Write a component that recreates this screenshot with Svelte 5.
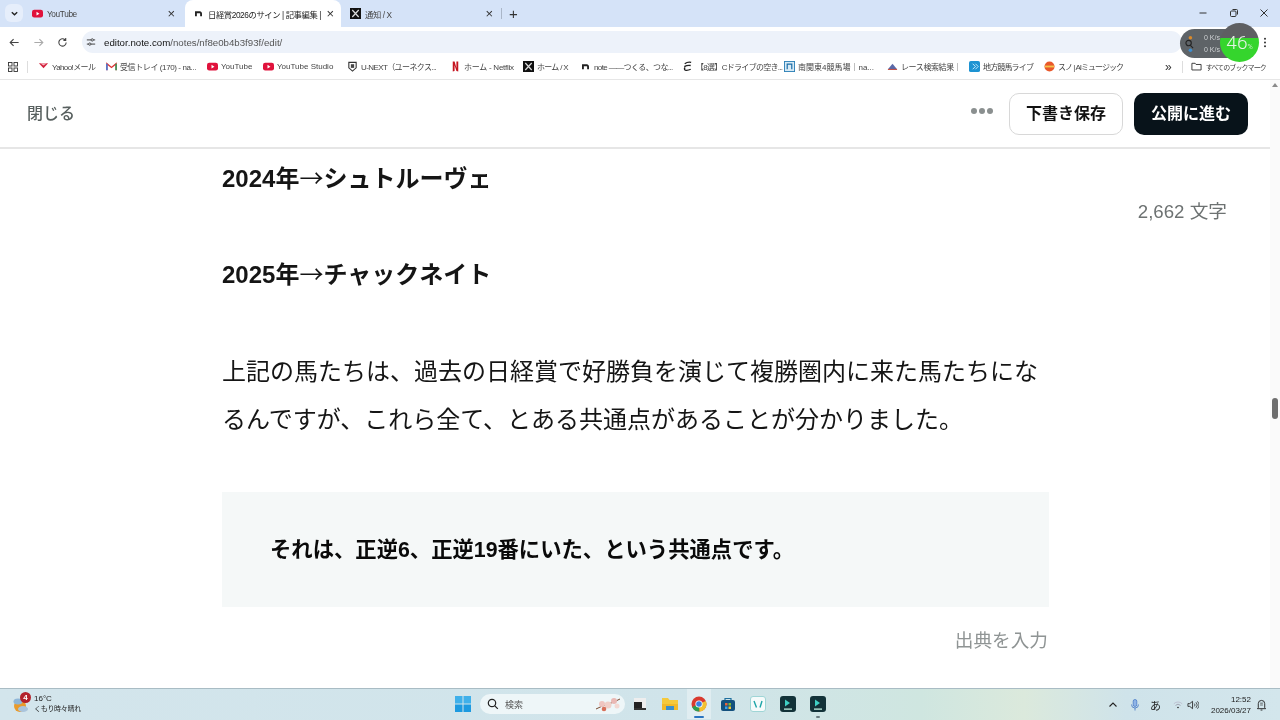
<script>
  const bookmarks = [
    { t: 'Yahoo!メール', w: 68, ls: -0.6, i: 'yahoo' },
    { t: '受信トレイ (170) - na...', w: 101, ls: -0.4, i: 'gmail' },
    { t: 'YouTube', w: 56, ls: 0, i: 'yt' },
    { t: 'YouTube Studio', w: 84, ls: 0, i: 'yt' },
    { t: 'U-NEXT（ユーネクス...', w: 103, ls: -0.6, i: 'unext' },
    { t: 'ホーム - Netflix', w: 73, ls: -0.25, i: 'netflix' },
    { t: 'ホーム / X', w: 57, ls: -0.7, i: 'x' },
    { t: 'note ――つくる、つな...', w: 102, ls: -0.6, i: 'note' },
    { t: '【8選】Cドライブの空き...', w: 102, ls: -0.7, i: 'e' },
    { t: '南関東4競馬場｜na...', w: 103, ls: 0, i: 'nankan' },
    { t: 'レース検索結果｜', w: 82, ls: -0.4, i: 'race' },
    { t: '地方競馬ライブ', w: 75, ls: -0.85, i: 'chiho' },
    { t: 'スノ | AIミュージック', w: 82, ls: -1, i: 'suno' }
  ];
</script>

{#snippet favicon(kind)}
  {#if kind === 'yt'}
    <svg class="fav" viewBox="0 0 12 12"><rect x="0" y="2" width="12" height="8.4" rx="2.4" fill="#e0123c"/><path d="M4.9 4.2v4l3.2-2z" fill="#fff"/></svg>
  {:else if kind === 'x'}
    <svg class="fav" viewBox="0 0 12 12"><rect width="12" height="12" fill="#111"/><path d="M2.5 2.2l7 7.6M9.5 2.2l-7 7.6" stroke="#ddd" stroke-width="1.3"/></svg>
  {:else if kind === 'note'}
    <svg class="fav" viewBox="0 0 12 12"><path d="M3.2 9V4.600h4.300a1.300 1.300 0 0 1 1.300 1.300V9" fill="none" stroke="#222" stroke-width="2"/></svg>
  {:else if kind === 'yahoo'}
    <svg class="fav" viewBox="0 0 12 12"><path d="M1 2.5h10L6 8z" fill="#d3203c"/><path d="M2.5 2.5h7L6 5z" fill="#f4b7c0"/></svg>
  {:else if kind === 'gmail'}
    <svg class="fav" viewBox="0 0 12 12"><path d="M1 10V3l5 4 5-4v7" fill="none" stroke="#d33" stroke-width="1.5"/><path d="M1 10V3" stroke="#3a7de0" stroke-width="1.6"/><path d="M11 10V3" stroke="#2a9d5b" stroke-width="1.6"/></svg>
  {:else if kind === 'unext'}
    <svg class="fav" viewBox="0 0 12 12"><path d="M2 1.5h8v6L6 11 2 7.5z" fill="none" stroke="#333" stroke-width="1.2"/><rect x="4.2" y="3.5" width="3.6" height="4" fill="#444"/></svg>
  {:else if kind === 'netflix'}
    <svg class="fav" viewBox="0 0 12 12"><path d="M3 .5h2l2 7V.5h2v11l-2-.5-2-6.500V11l-2 .5z" fill="#c5141f"/></svg>
  {:else if kind === 'e'}
    <svg class="fav" viewBox="0 0 12 12"><path d="M3 3c2-1.500 5-2 7-1.500M2.500 6.200c2-1.200 5-1.700 7-1.300M3.500 10c-1.200-1-1-2.200 0-3M3.500 10c2 .5 4 0 6-1" fill="none" stroke="#222" stroke-width="1.500"/></svg>
  {:else if kind === 'nankan'}
    <svg class="fav" viewBox="0 0 12 12"><rect x=".5" y=".5" width="11" height="11" fill="#d7eaf5" stroke="#2a7fb5"/><path d="M3.500 9V3.500h5V9" fill="none" stroke="#1c6ea8" stroke-width="1.300"/></svg>
  {:else if kind === 'race'}
    <svg class="fav" viewBox="0 0 12 12"><path d="M1 9l5-6 5 6z" fill="#5a6aa8"/><path d="M1 9.200h10" stroke="#c0392b" stroke-width="1"/></svg>
  {:else if kind === 'chiho'}
    <svg class="fav" viewBox="0 0 12 12"><rect width="12" height="12" rx="2" fill="#1d93d2"/><path d="M4 3l3 3-3 3M7 3l3 3-3 3" fill="none" stroke="#cfeeff" stroke-width="1"/></svg>
  {:else if kind === 'suno'}
    <svg class="fav" viewBox="0 0 12 12"><circle cx="6" cy="6" r="5.500" fill="#e9582a"/><path d="M1 6h10" stroke="#f4c24a" stroke-width="2"/></svg>
  {/if}
{/snippet}

<div class="screen">
  <header class="chrome">
    <div class="tabstrip">
      <div class="tab-menu">
        <svg viewBox="0 0 10 10" width="9" height="9"><path d="M2 3.500l3 3 3-3" fill="none" stroke="#222" stroke-width="1.500"/></svg>
      </div>
      <div class="tab first">
        {@render favicon('yt')}
        <span class="tab-title">YouTube</span>
        <span class="tab-x">×</span>
      </div>
      <div class="tab active">
        {@render favicon('note')}
        <span class="tab-title">日経賞2026のサイン | 記事編集 |</span>
        <span class="tab-x">×</span>
      </div>
      <div class="tab last">
        {@render favicon('x')}
        <span class="tab-title">通知 / X</span>
        <span class="tab-x">×</span>
      </div>
      <div class="tab-sep"></div>
      <span class="plus">+</span>
      <div class="winctl">
        <svg viewBox="0 0 10 10"><path d="M1.500 5h7" stroke="#333" stroke-width="1"/></svg>
        <svg viewBox="0 0 10 10"><rect x="1.500" y="3" width="5.500" height="5.500" rx="1" fill="none" stroke="#333"/><path d="M3.500 1.500h4a1 1 0 0 1 1 1v4" fill="none" stroke="#333"/></svg>
        <svg viewBox="0 0 10 10"><path d="M1.500 1.500l7 7M8.500 1.500l-7 7" stroke="#333" stroke-width="1"/></svg>
      </div>
    </div>

    <div class="toolbar">
      <svg class="nav" viewBox="0 0 12 12"><path d="M10.500 6h-9M5 2.300L1.300 6 5 9.700" fill="none" stroke="#444" stroke-width="1.200"/></svg>
      <svg class="nav" viewBox="0 0 12 12"><path d="M1.500 6h9M7 2.300L10.700 6 7 9.700" fill="none" stroke="#aaa" stroke-width="1.200"/></svg>
      <svg class="nav" viewBox="0 0 12 12"><path d="M10 6a4 4 0 1 1-1.200-2.900M9.500 1.200v2.500H7" fill="none" stroke="#444" stroke-width="1.200"/></svg>
      <div class="omnibox">
        <svg class="tune" viewBox="0 0 12 12"><path d="M1 3.500h5M9 3.500h2M1 8.500h2M6 8.500h5" stroke="#333" stroke-width="1.100"/><circle cx="7.500" cy="3.500" r="1.400" fill="none" stroke="#333"/><circle cx="4.500" cy="8.500" r="1.400" fill="none" stroke="#333"/></svg>
        <span class="url"><b>editor.note.com</b>/notes/nf8e0b4b3f93f/edit/</span>
      </div>
      <svg class="kebab" viewBox="0 0 4 12"><circle cx="2" cy="2" r="1.100"/><circle cx="2" cy="6" r="1.100"/><circle cx="2" cy="10" r="1.100"/></svg>
    </div>

    <div class="bookmarks">
      <svg class="apps" viewBox="0 0 10 10"><g fill="none" stroke="#333" stroke-width=".9"><rect x=".5" y=".5" width="3.500" height="3.500"/><rect x="6" y=".5" width="3.500" height="3.500"/><rect x=".5" y="6" width="3.500" height="3.500"/><rect x="6" y="6" width="3.500" height="3.500"/></g></svg>
      <div class="bm-sep"></div>
      {#each bookmarks as b}
        <div class="bm" style:width="{b.w}px">
          {@render favicon(b.i)}
          <span class="bm-text" style:letter-spacing="{b.ls}px">{b.t}</span>
        </div>
      {/each}
      <span class="more">»</span>
      <div class="bm-sep right"></div>
      <svg class="folder" viewBox="0 0 12 12"><path d="M1 2.500h3.500l1 1.300H11v6H1z" fill="none" stroke="#333" stroke-width="1"/></svg>
      <span class="bm-text all">すべてのブックマーク</span>
    </div>

    <div class="netmeter">
      <div class="meter-left">
        <svg viewBox="0 0 14 20" width="13" height="18"><circle cx="8" cy="3" r="2" fill="#d98a2b"/><circle cx="6" cy="9" r="3" fill="none" stroke="#222" stroke-width="1.200"/><path d="M8 11.500l3 3" stroke="#222" stroke-width="1.200"/><circle cx="8" cy="17" r="2" fill="#3d8ecf"/></svg>
        <div class="rates"><span>0 K/s</span><span>0 K/s</span></div>
      </div>
      <div class="meter-ball"><span class="pct">46<small>%</small></span></div>
    </div>
  </header>

  <div class="viewport">
    <div class="page">
      <div class="note-bar">
        <span class="close">閉じる</span>
        <div class="actions">
          <div class="dots"><i></i><i></i><i></i></div>
          <div class="btn ghost">下書き保存</div>
          <div class="btn solid">公開に進む</div>
        </div>
      </div>

      <main class="editor">
        <article class="article">
          <p class="strong">2024年<span class="arrow">→</span>シュトルーヴェ</p>
          <p class="blank"></p>
          <p class="strong">2025年<span class="arrow">→</span>チャックネイト</p>
          <p class="blank"></p>
          <p class="body">上記の馬たちは、過去の日経賞で好勝負を演じて複勝圏内に来た馬たちにな<br />るんですが、これら全て、とある共通点があることが分かりました。</p>
          <blockquote>それは、正逆6、正逆19番にいた、という共通点です。</blockquote>
          <div class="cite">出典を入力</div>
        </article>
        <div class="count">2,662 文字</div>
      </main>
    </div>
    <div class="scrollbar">
      <span class="sb-arrow"></span>
      <div class="thumb"></div>
    </div>
  </div>

  <footer class="taskbar">
    <div class="weather">
      <div class="w-icon">
        <svg viewBox="0 0 18 18" width="18" height="18"><circle cx="8" cy="10" r="6" fill="#e99a2c"/><ellipse cx="6" cy="5.500" rx="4.500" ry="3" fill="#8fb6d8"/><ellipse cx="11" cy="13" rx="5" ry="3" fill="#a9c4dc"/></svg>
        <span class="w-badge">4</span>
      </div>
      <div class="w-text"><span>16°C</span><span class="w-desc">くもり時々晴れ</span></div>
    </div>

    <div class="center">
      <svg class="tb win" viewBox="0 0 16 16"><g fill="#1d9ae0"><rect x="0" y="0" width="7.500" height="7.500" fill="#3fb0ea"/><rect x="8.500" y="0" width="7.500" height="7.500" fill="#3fb0ea"/><rect x="0" y="8.500" width="7.500" height="7.500"/><rect x="8.500" y="8.500" width="7.500" height="7.500"/></g></svg>
      <div class="search">
        <svg viewBox="0 0 12 12" width="12" height="12"><circle cx="5" cy="5" r="3.700" fill="none" stroke="#222" stroke-width="1.200"/><path d="M7.800 7.800l3 3" stroke="#222" stroke-width="1.200"/></svg>
        <span class="s-text">検索</span>
        <svg class="blossom" viewBox="0 0 26 16" width="26" height="16"><path d="M1 13C8 9 16 8 25 3" stroke="#7a4a30" stroke-width="1" fill="none"/><circle cx="7" cy="8" r="3" fill="#efc5c0"/><circle cx="13" cy="9" r="3.500" fill="#f0cfc8"/><circle cx="19" cy="5" r="3" fill="#eab8b4"/><circle cx="22" cy="10" r="2.500" fill="#f3d8d2"/><circle cx="9" cy="13" r="2.300" fill="#d8705a"/></svg>
      </div>
      <svg class="tb step" viewBox="0 0 16 16"><rect x="2" y="2" width="12" height="12" fill="#eee"/><rect x="2" y="6" width="8" height="8" fill="#222"/><rect x="2" y="12" width="12" height="2" fill="#333"/></svg>
      <svg class="tb step" viewBox="0 0 16 16"><path d="M0 2h6l1.500 2H16v10H0z" fill="#f5c93c"/><rect x="0" y="8" width="16" height="6" fill="#f1b92a"/><rect x="4" y="10" width="8" height="4" fill="#3a8fcb"/></svg>
      <div class="slot hot">
        <svg class="tb" viewBox="0 0 16 16"><circle cx="8" cy="8" r="7.500" fill="#d93a2f"/><path d="M8 8L1.200 11A7.500 7.500 0 0 0 8.500 15.500z" fill="#2e9e4f"/><path d="M8 8l6.900-3A7.500 7.500 0 0 1 8.500 15.500z" fill="#f2c230"/><circle cx="8" cy="8" r="3.600" fill="#fff"/><circle cx="8" cy="8" r="2.800" fill="#3b7fe3"/></svg>
        <span class="running"></span>
      </div>
      <svg class="tb step" viewBox="0 0 16 16"><path d="M5 4V2.500h6V4" fill="none" stroke="#1d6f9e" stroke-width="1.200"/><rect x="1" y="4" width="14" height="11" rx="2" fill="#13507d"/><rect x="5" y="7" width="2.500" height="2.500" fill="#e9643a"/><rect x="8.500" y="7" width="2.500" height="2.500" fill="#7cbb3a"/><rect x="5" y="10.500" width="2.500" height="2.500" fill="#3aa0e9"/><rect x="8.500" y="10.500" width="2.500" height="2.500" fill="#f2c230"/></svg>
      <svg class="tb step" viewBox="0 0 16 16"><rect x=".5" y=".5" width="15" height="15" rx="2.500" fill="#f6fbfb" stroke="#9fd5d6"/><path d="M4 5l2.500 6.500M12 5l-2 6.500" stroke="#1da5a8" stroke-width="1.400"/></svg>
      <svg class="tb step" viewBox="0 0 16 16"><rect width="16" height="16" rx="3" fill="#123238"/><path d="M5 3.500l5 3.500-5 3.500" fill="#3fd1c5"/><rect x="4" y="12.500" width="8" height="1.200" fill="#cfe"/></svg>
      <div class="slot">
        <svg class="tb" viewBox="0 0 16 16"><rect width="16" height="16" rx="3" fill="#123238"/><path d="M5 3.500l5 3.500-5 3.500" fill="#3fd1c5"/><rect x="4" y="12.500" width="8" height="1.200" fill="#cfe"/></svg>
        <span class="running small"></span>
      </div>
    </div>

    <div class="tray">
      <svg class="tr" viewBox="0 0 10 10"><path d="M1.500 6.500L5 3l3.500 3.500" fill="none" stroke="#222" stroke-width="1.100"/></svg>
      <svg class="tr mic" viewBox="0 0 10 12"><rect x="3.200" y=".5" width="3.600" height="7" rx="1.800" fill="#8fb4e6" stroke="#3f73c4" stroke-width=".7"/><path d="M1.500 5.500a3.500 3.500 0 0 0 7 0M5 9v2.500" fill="none" stroke="#3f73c4" stroke-width=".8"/></svg>
      <span class="ime">あ</span>
      <svg class="tr wifi" viewBox="0 0 12 10"><path d="M1 3.500a7 7 0 0 1 10 0" fill="none" stroke="#bbc" stroke-width="1"/><path d="M3 5.500a4.200 4.200 0 0 1 6 0" fill="none" stroke="#99a" stroke-width="1"/><circle cx="6" cy="8" r="1" fill="#222"/></svg>
      <svg class="tr vol" viewBox="0 0 13 10"><path d="M1 3.500h2L6 1v8L3 6.500H1z" fill="none" stroke="#222" stroke-width=".9"/><path d="M8 3.500a2.200 2.200 0 0 1 0 3M9.700 2a4.300 4.300 0 0 1 0 6M11.300 1a6 6 0 0 1 0 8" fill="none" stroke="#222" stroke-width=".8"/></svg>
      <div class="clock"><span>12:52</span><span>2026/03/27</span></div>
      <svg class="tr bell" viewBox="0 0 12 13"><path d="M2.500 9.500V5a3.500 3.500 0 0 1 7 0v4.500l1 1h-9zM5 12h2" fill="none" stroke="#222" stroke-width="1"/><path d="M4.500 4.500h3M4.500 6.500h3" stroke="#222" stroke-width=".7"/></svg>
    </div>
  </footer>
</div>

<style>
  :global(body) {
    margin: 0;
    background: #fff;
  }
  .screen {
    width: 1280px;
    height: 720px;
    display: flex;
    flex-direction: column;
    overflow: hidden;
    font-family: "Liberation Sans", "Noto Sans CJK JP", sans-serif;
    color: #0a0a0a;
    filter: blur(.3px);
  }
  .chrome {
    position: relative;
    height: 80px;
    flex: none;
    background: #fff;
    display: flex;
    flex-direction: column;
  }
  .fav {
    width: 11px;
    height: 11px;
    flex: none;
  }
  .tabstrip {
    height: 27px;
    background: #d5e3f8;
    display: flex;
    align-items: flex-end;
    padding-left: 4px;
    flex: none;
  }
  .tab-menu {
    width: 18px;
    height: 18px;
    margin: 0 0 5px 1px;
    background: #e6eefb;
    border-radius: 6px;
    display: flex;
    align-items: center;
    justify-content: center;
    flex: none;
  }
  .tab {
    height: 27px;
    box-sizing: border-box;
    display: flex;
    align-items: center;
    gap: 4px;
    font-size: 8.3px;
    color: #444;
    flex: none;
  }
  .tab.first {
    width: 161px;
    margin-left: 1px;
    padding: 0 10px 0 8px;
  }
  .tab.active {
    width: 156px;
    padding: 0 7px 0 8px;
    background: #fff;
    border-radius: 8px 8px 0 0;
    color: #222;
  }
  .tab.last {
    width: 160px;
    padding: 0 8px 0 9px;
  }
  .tab-title {
    flex: 1;
    white-space: nowrap;
    overflow: hidden;
    letter-spacing: -.4px;
  }
  .tab-x {
    font-size: 13px;
    line-height: 1;
    color: #333;
  }
  .tab-sep {
    width: 1px;
    height: 11px;
    background: #aab6c8;
    margin: 0 0 8px 0;
    flex: none;
  }
  .plus {
    font-size: 15px;
    line-height: 27px;
    margin-left: 7px;
    color: #333;
  }
  .winctl {
    margin-left: auto;
    display: flex;
    gap: 20.5px;
    padding: 0 11px 9px 0;
  }
  .winctl svg {
    width: 10px;
    height: 10px;
    display: block;
  }
  .toolbar {
    height: 27px;
    flex: none;
    display: flex;
    align-items: center;
    background: #fff;
    padding: 3px 0 0 9px;
    box-sizing: border-box;
  }
  .nav {
    width: 11px;
    height: 11px;
    margin-right: 13px;
    flex: none;
  }
  .omnibox {
    width: 1100px;
    height: 22px;
    margin-left: 1px;
    background: #edf2fa;
    border-radius: 11px;
    display: flex;
    align-items: center;
    padding-left: 4px;
    box-sizing: border-box;
    font-size: 9.7px;
    color: #555;
  }
  .tune {
    width: 10px;
    height: 10px;
    margin-right: 8px;
  }
  .url b {
    font-weight: 400;
    color: #111;
  }
  .kebab {
    width: 4px;
    height: 11px;
    margin: 0 13px 0 auto;
    fill: #333;
  }
  .bookmarks {
    height: 26px;
    flex: none;
    display: flex;
    align-items: center;
    padding-left: 8px;
    font-size: 8px;
    color: #444;
    background: #fff;
    border-bottom: 1px solid #e6e6e6;
    box-sizing: border-box;
  }
  .apps {
    width: 10px;
    height: 10px;
    flex: none;
  }
  .bm-sep {
    width: 1px;
    height: 12px;
    background: #ddd;
    margin: 0 10px 0 9px;
    flex: none;
  }
  .bm {
    display: flex;
    align-items: center;
    gap: 3px;
    flex: none;
    box-sizing: border-box;
    overflow: hidden;
  }
  .bm-text {
    white-space: nowrap;
  }
  .more {
    margin-left: 39px;
    font-size: 12px;
    color: #333;
  }
  .bm-sep.right {
    margin: 0 8px 0 10px;
  }
  .folder {
    width: 11px;
    height: 11px;
    margin: 0 4px 0 0;
    flex: none;
  }
  .all {
    font-size: 7px;
    letter-spacing: -.9px;
  }
  .netmeter {
    position: absolute;
    left: 1180px;
    top: 23px;
    width: 79px;
    height: 39px;
    display: flex;
    align-items: center;
  }
  .meter-left {
    position: absolute;
    left: 0;
    top: 6px;
    width: 60px;
    height: 29px;
    border-radius: 15px 0 0 15px;
    background: #5e6367;
    display: flex;
    align-items: center;
    gap: 8px;
    padding-left: 3px;
    box-sizing: border-box;
  }
  .rates {
    display: flex;
    flex-direction: column;
    gap: 2px;
    font-size: 7px;
    line-height: 10px;
    color: #cfd2d4;
  }
  .meter-ball {
    position: absolute;
    right: 0;
    top: 0;
    width: 39px;
    height: 39px;
    border-radius: 50%;
    background: linear-gradient(#5e5f62 0 38%, #35d52d 38%);
    display: flex;
    align-items: center;
    justify-content: center;
    overflow: hidden;
  }
  .pct {
    color: #e6f3e6;
    font-family: Roboto, sans-serif;
    font-weight: 300;
    font-size: 19px;
    line-height: 1;
  }
  .pct small { font-size: 7px; }

  .viewport {
    flex: 1;
    min-height: 0;
    display: flex;
    background: #fff;
  }
  .page {
    flex: 1;
    min-width: 0;
    display: flex;
    flex-direction: column;
  }
  .note-bar {
    height: 69px;
    flex: none;
    display: flex;
    align-items: center;
    justify-content: space-between;
    padding: 0 22px 0 27px;
    border-bottom: 2px solid #e6e6e6;
    box-sizing: border-box;
  }
  .close {
    font-size: 16px;
    color: #58605f;
    font-weight: 500;
    padding-bottom: 3px;
  }
  .actions {
    display: flex;
    align-items: center;
  }
  .dots {
    display: flex;
    gap: 2px;
    margin: 0 16px 5px 0;
  }
  .dots i {
    width: 6px;
    height: 6px;
    border-radius: 50%;
    background: #8a8f8f;
  }
  .btn {
    height: 42px;
    border-radius: 10px;
    display: flex;
    align-items: center;
    justify-content: center;
    font-size: 16px;
    font-weight: 700;
    box-sizing: border-box;
    padding-bottom: 3px;
  }
  .ghost {
    width: 114px;
    background: #fff;
    border: 1px solid #d8d8d8;
    color: #111;
    margin-right: 11px;
  }
  .solid {
    width: 114px;
    background: #08131a;
    color: #fff;
  }
  .editor {
    flex: 1;
    min-height: 0;
    position: relative;
    overflow: hidden;
    padding: 6px 0 0 222px;
  }
  .article {
    width: 827px;
    font-size: 24px;
    line-height: 48px;
    color: #151515;
  }
  .article p {
    margin: 0;
  }
  .article p.body {
    padding-top: 1px;
    margin-bottom: -1px;
  }
  .arrow {
    font-family: "Noto Sans CJK JP", sans-serif;
    font-weight: 400;
    line-height: 0;
  }
  .blank {
    height: 48px;
  }
  .strong {
    font-weight: 700;
  }
  blockquote {
    margin: 49px 0 0;
    height: 115px;
    box-sizing: border-box;
    padding: 2px 48px 0;
    display: flex;
    align-items: center;
    background: #f5f8f8;
    font-size: 21.33px;
    font-weight: 700;
    line-height: 1.5;
    color: #0a0a0a;
  }
  .cite {
    margin-top: 18px;
    text-align: right;
    font-size: 18.67px;
    line-height: 32px;
    color: #8f9494;
    padding-right: 1px;
  }
  .count {
    position: absolute;
    right: 43px;
    top: 49px;
    font-size: 18.67px;
    line-height: 28px;
    color: #6d7272;
  }
  .scrollbar {
    width: 10px;
    flex: none;
    background: #fafafa;
    position: relative;
  }
  .sb-arrow {
    position: absolute;
    left: 2px;
    top: 3px;
    border: 3px solid transparent;
    border-top: 0;
    border-bottom: 4px solid #8a8a8a;
  }
  .thumb {
    position: absolute;
    left: 2px;
    top: 318px;
    width: 6px;
    height: 21px;
    border-radius: 3px;
    background: #6e6e6e;
  }

  .taskbar {
    height: 32px;
    flex: none;
    position: relative;
    display: flex;
    align-items: center;
    background: linear-gradient(90deg, #d3e5ec 0%, #d0e4ea 55%, #cfe6e0 72%, #dbe9dc 80%, #cfe3ea 88%, #d3e6ec 100%);
    border-top: 1px solid #a9bcc4;
    box-sizing: border-box;
  }
  .weather {
    display: flex;
    align-items: center;
    gap: 4px;
    padding-left: 12px;
  }
  .w-icon {
    position: relative;
    width: 18px;
    height: 18px;
  }
  .w-badge {
    position: absolute;
    left: 8px;
    top: -4px;
    width: 11px;
    height: 11px;
    border-radius: 50%;
    background: #b3202a;
    color: #fff;
    font-size: 8px;
    font-weight: 700;
    line-height: 11px;
    text-align: center;
  }
  .w-text {
    display: flex;
    flex-direction: column;
    font-size: 8px;
    line-height: 10px;
    color: #222;
    margin-top: -1px;
  }
  .w-desc {
    font-size: 7px;
    letter-spacing: -.3px;
  }
  .center {
    position: absolute;
    left: 455px;
    top: 0;
    height: 30px;
    display: flex;
    align-items: center;
  }
  .tb {
    width: 16px;
    height: 16px;
    flex: none;
    display: block;
  }
  .win {
    margin-right: 9px;
  }
  .search {
    width: 145px;
    height: 20px;
    margin-right: 7px;
    border-radius: 10px;
    background: #eef6f8;
    display: flex;
    align-items: center;
    padding: 0 4px 0 7px;
    box-sizing: border-box;
    gap: 6px;
    font-size: 9px;
    color: #555;
  }
  .s-text { flex: 1; }
  .step {
    margin-right: 14px;
  }
  .slot {
    position: relative;
    margin-right: 14px;
    display: flex;
    align-items: center;
    justify-content: center;
  }
  .slot.hot {
    margin: 0 9px 0 -5px;
    width: 24px;
    height: 30px;
    background: rgba(255, 255, 255, .35);
  }
  .running {
    position: absolute;
    left: 7px;
    bottom: 1px;
    width: 10px;
    height: 2px;
    border-radius: 1px;
    background: #2a74c0;
  }
  .running.small {
    left: 6px;
    bottom: -6px;
    width: 4px;
    background: #6a7b80;
  }
  .tray {
    margin-left: auto;
    display: flex;
    align-items: center;
    padding-right: 13px;
  }
  .tr {
    width: 10px;
    height: 10px;
    flex: none;
  }
  .mic {
    height: 12px;
    margin-left: 12px;
  }
  .ime {
    font-size: 11px;
    margin-left: 10px;
    color: #222;
  }
  .wifi {
    width: 10px;
    margin-left: 12px;
  }
  .vol {
    width: 12px;
    margin-left: 4px;
  }
  .clock {
    display: flex;
    flex-direction: column;
    align-items: flex-end;
    font-size: 8px;
    line-height: 11px;
    color: #222;
    margin-left: 12px;
  }
  .bell {
    width: 11px;
    height: 12px;
    margin-left: 5px;
  }
</style>
